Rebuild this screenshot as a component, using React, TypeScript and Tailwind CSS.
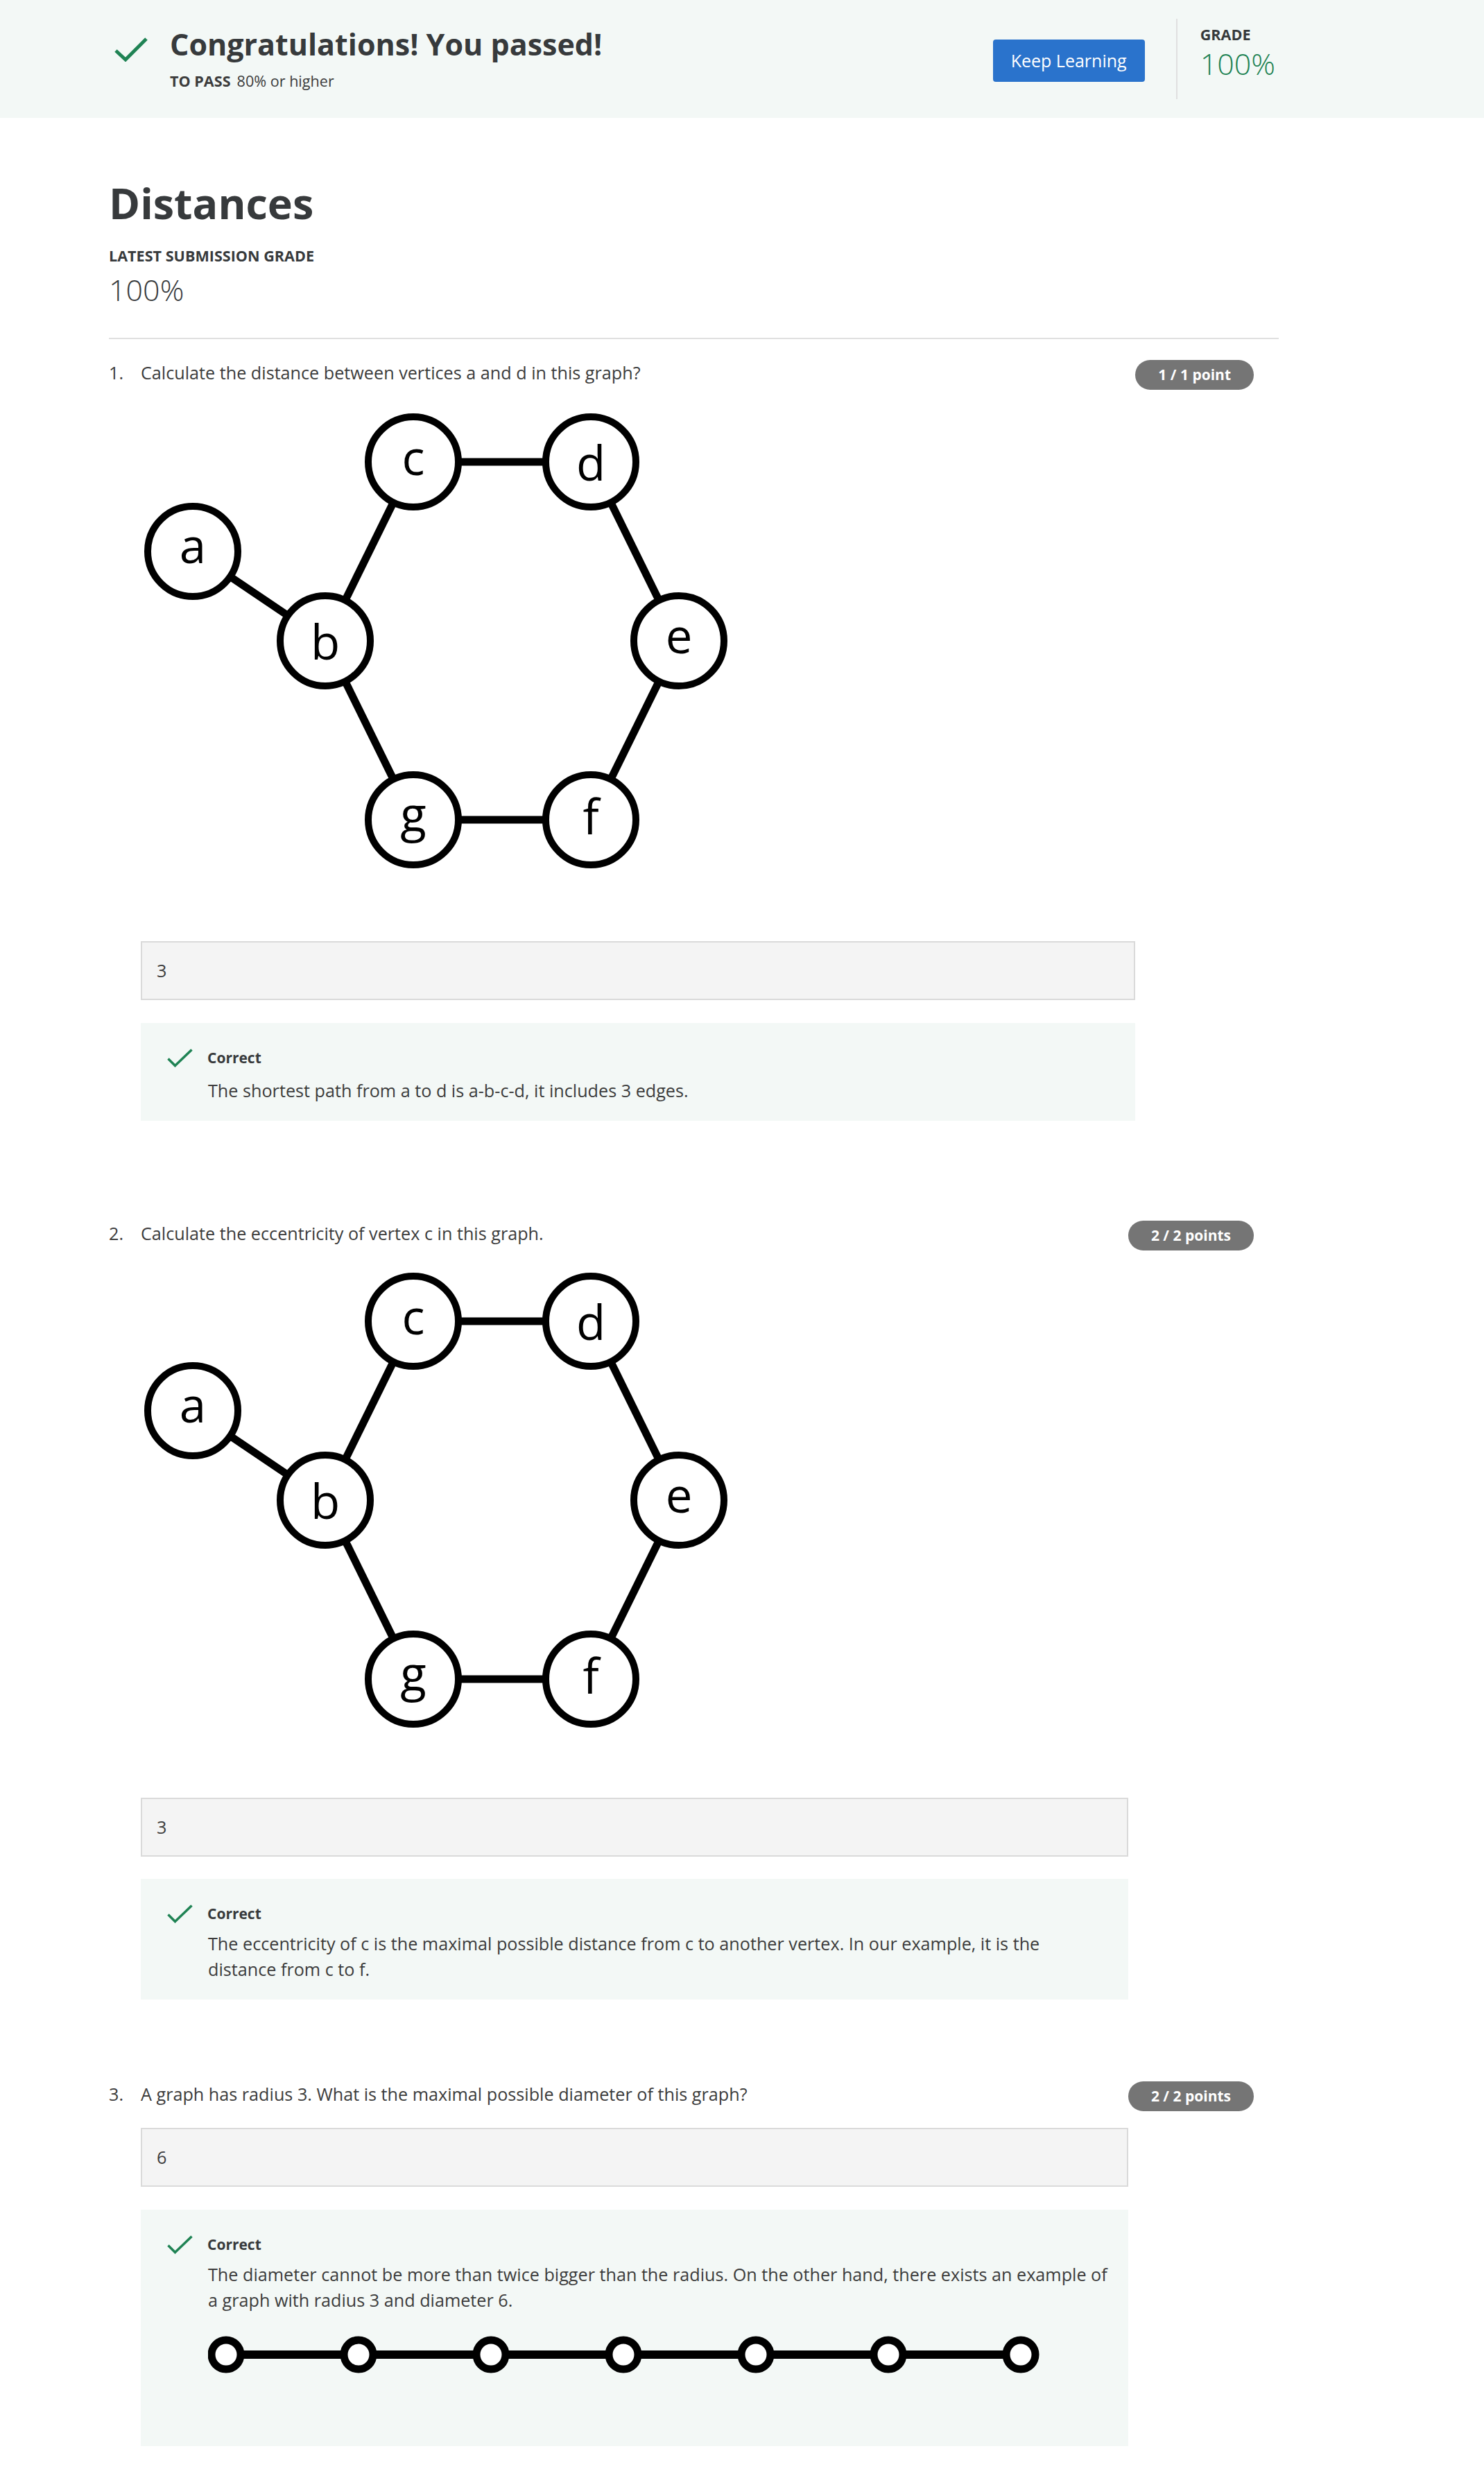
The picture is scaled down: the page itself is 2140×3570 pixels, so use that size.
import React from 'react';

const GREEN = '#1f8354';

type GraphNode = { id: string; x: number; y: number; dy: number };

const HEX_NODES: GraphNode[] = [
  { id: 'a', x: 75, y: 210, dy: 17 },
  { id: 'b', x: 266, y: 339, dy: 27 },
  { id: 'c', x: 393, y: 81, dy: 19 },
  { id: 'd', x: 649, y: 81, dy: 27 },
  { id: 'e', x: 776, y: 339, dy: 18 },
  { id: 'f', x: 649, y: 597, dy: 21 },
  { id: 'g', x: 393, y: 597, dy: 17 },
];

const HEX_EDGES: [string, string][] = [
  ['a', 'b'],
  ['b', 'c'],
  ['c', 'd'],
  ['d', 'e'],
  ['e', 'f'],
  ['f', 'g'],
  ['g', 'b'],
];

const HeaderCheck = () => (
  <svg width="48" height="36" viewBox="0 0 48 36" className="block shrink-0">
    <polyline points="2,20 16,33 46,3" fill="none" stroke={GREEN} strokeWidth="5" />
  </svg>
);

const SmallCheck = () => (
  <svg width="37" height="27" viewBox="0 0 37 27" className="block shrink-0">
    <polyline points="1.5,14.5 11.5,24.5 35.5,1.5" fill="none" stroke={GREEN} strokeWidth="3.5" />
  </svg>
);

const HexGraph = () => {
  const byId = Object.fromEntries(HEX_NODES.map((n) => [n.id, n]));
  return (
    <svg width="860" height="690" viewBox="0 0 860 690" className="block">
      {HEX_EDGES.map(([u, v]) => (
        <line
          key={u + v}
          x1={byId[u].x}
          y1={byId[u].y}
          x2={byId[v].x}
          y2={byId[v].y}
          stroke="#000"
          strokeWidth="11"
        />
      ))}
      {HEX_NODES.map((n) => (
        <g key={n.id}>
          <circle cx={n.x} cy={n.y} r="65" fill="#fff" stroke="#000" strokeWidth="10" />
          <text
            x={n.x}
            y={n.y + n.dy}
            textAnchor="middle"
            fontSize="69"
            fontFamily="'Open Sans', sans-serif"
            fill="#000"
          >
            {n.id}
          </text>
        </g>
      ))}
    </svg>
  );
};

const PathGraph = () => {
  const xs = [0, 1, 2, 3, 4, 5, 6].map((i) => 26 + i * 191);
  return (
    <svg width="1200" height="80" viewBox="0 0 1200 80" className="block">
      <line x1={xs[0]} y1="40" x2={xs[6]} y2="40" stroke="#000" strokeWidth="12" />
      {xs.map((x) => (
        <circle key={x} cx={x} cy="40" r="21" fill="#fff" stroke="#000" strokeWidth="11" />
      ))}
    </svg>
  );
};

const Badge = ({ label }: { label: string }) => (
  <div className="shrink-0 h-[43px] rounded-full bg-[#757575] px-[33px] flex items-center text-[21px] font-bold text-white leading-none whitespace-nowrap">
    {label}
  </div>
);

const AnswerBox = ({ value, className = '' }: { value: string; className?: string }) => (
  <div
    className={
      'h-[85px] border-2 border-[#dadada] bg-[#f4f4f4] flex items-center pl-[21px] text-[25.2px] text-[#3c3c3c] ' +
      className
    }
  >
    {value}
  </div>
);

const Feedback = ({
  children,
  className = '',
  textClass = 'mt-[10px]',
}: {
  children: React.ReactNode;
  className?: string;
  textClass?: string;
}) => (
  <div className={'bg-[#f3f8f6] pl-[38px] pr-[27px] pt-[35px] pb-[25px] ' + className}>
    <div className="flex items-center h-[30px]">
      <SmallCheck />
      <span className="ml-[21px] text-[21px] font-bold leading-[30px] text-[#373a3c]">Correct</span>
    </div>
    <div className={'pl-[59px] text-[25.2px] leading-[37px] text-[#3c3c3c] ' + textClass}>{children}</div>
  </div>
);

const QuestionRow = ({
  num,
  text,
  badge,
  className = '',
  children,
}: {
  num: string;
  text: string;
  badge: string;
  className?: string;
  children: React.ReactNode;
}) => (
  <div className={'flex pr-[36px] ' + className}>
    <div className="w-[46px] shrink-0 text-[25.2px] leading-[36px] text-[#3c3c3c]">{num}</div>
    <div className="flex-1 min-w-0">
      <p className="text-[25.2px] leading-[36px] text-[#3c3c3c]">{text}</p>
      {children}
    </div>
    <Badge label={badge} />
  </div>
);

export default function App() {
  return (
    <div className="min-h-screen bg-white font-['Open_Sans',sans-serif] text-[#373a3c]">
      <header className="h-[170px] bg-[#f3f8f6]">
        <div className="ml-[157px] w-[1687px] flex items-start">
          <div className="flex items-start pt-[39px]">
            <div className="ml-[8px] mt-[14px]">
              <HeaderCheck />
            </div>
            <div className="ml-[32px]">
              <h2 className="text-[43px] font-bold leading-[50px] text-[#373a3c]">Congratulations! You passed!</h2>
              <div className="mt-[13px] text-[21.6px] leading-[30px] text-[#3c3c3c]">
                <span className="font-bold">TO PASS</span>
                <span className="ml-[9px]">80% or higher</span>
              </div>
            </div>
          </div>
          <button className="ml-auto mt-[57px] h-[61px] w-[219px] rounded-[4px] bg-[#2a73cc] text-white text-[25px] font-normal">
            Keep Learning
          </button>
          <div className="ml-[45px] mt-[27px] h-[116px] w-[2px] bg-[#e0e0e0]" />
          <div className="ml-[33px] pt-[35px] pr-[5px]">
            <div className="text-[21.6px] font-bold leading-[30px] text-[#373a3c]">GRADE</div>
            <div className="mt-[2px] text-[43px] font-light leading-[50px] text-[#1f8354]">100%</div>
          </div>
        </div>
      </header>

      <main className="ml-[157px] w-[1687px] pb-[42px]">
        <h1 className="mt-[83px] text-[61px] font-bold leading-[80px] text-[#373a3c]">Distances</h1>
        <div className="mt-[21px] text-[21.6px] font-bold leading-[30px] text-[#373a3c]">LATEST SUBMISSION GRADE</div>
        <div className="mt-[4px] text-[43px] font-light leading-[60px] text-[#373a3c]">100%</div>
        <div className="mt-[39px] h-[2px] bg-[#e0e0e0]" />

        <QuestionRow
          num="1."
          text="Calculate the distance between vertices a and d in this graph?"
          badge="1 / 1 point"
          className="mt-[30px]"
        >
          <div className="mt-[30px]">
            <HexGraph />
          </div>
          <AnswerBox value="3" className="mt-[82px]" />
          <Feedback className="mt-[33px]" textClass="mt-[14px]">
            The shortest path from a to d is a-b-c-d, it includes 3 edges.
          </Feedback>
        </QuestionRow>

        <QuestionRow
          num="2."
          text="Calculate the eccentricity of vertex c in this graph."
          badge="2 / 2 points"
          className="mt-[144px]"
        >
          <div className="mt-[28px]">
            <HexGraph />
          </div>
          <AnswerBox value="3" className="mt-[78px]" />
          <Feedback className="mt-[32px]">
            The eccentricity of c is the maximal possible distance from c to another vertex. In our example, it is the
            distance from c to f.
          </Feedback>
        </QuestionRow>

        <QuestionRow
          num="3."
          text="A graph has radius 3. What is the maximal possible diameter of this graph?"
          badge="2 / 2 points"
          className="mt-[118px]"
        >
          <AnswerBox value="6" className="mt-[31px]" />
          <Feedback className="mt-[33px]">
            The diameter cannot be more than twice bigger than the radius. On the other hand, there exists an example of
            a graph with radius 3 and diameter 6.
            <div className="mt-[20px] mb-[67px]">
              <PathGraph />
            </div>
          </Feedback>
        </QuestionRow>
      </main>
    </div>
  );
}
